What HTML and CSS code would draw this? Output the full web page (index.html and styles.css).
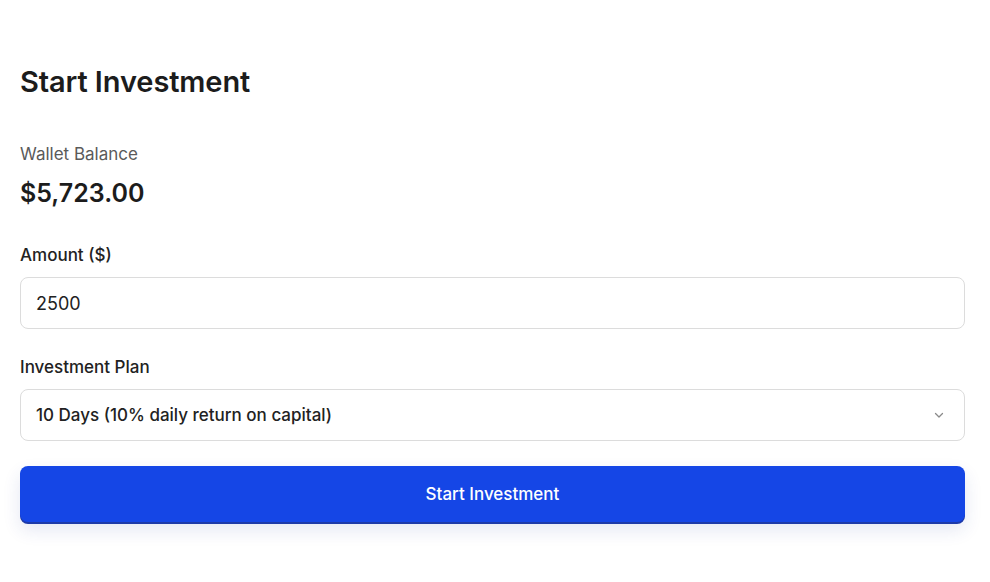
FILE: index.html
```html
<!DOCTYPE html>
<html lang="en">
<head>
  <meta charset="UTF-8">
  <meta name="viewport" content="width=device-width, initial-scale=1.0">
  <title>Start Investment</title>
  <link rel="stylesheet" href="styles.css">
</head>
<body>
  <div class="page">
    <h1>Start Investment</h1>

    <div class="balance">
      <div class="balance-label">Wallet Balance</div>
      <div class="balance-value">$5,723.00</div>
    </div>

    <div class="field">
      <label for="amount">Amount ($)</label>
      <input id="amount" class="control" type="text" value="2500">
    </div>

    <div class="field">
      <label for="plan">Investment Plan</label>
      <div class="select-wrap">
        <select id="plan" class="control select">
          <option>10 Days (10% daily return on capital)</option>
        </select>
        <svg class="chevron" width="12" height="12" viewBox="0 0 12 12">
          <path d="M2.5 4.5 L6 8 L9.5 4.5" fill="none" stroke="#8a8a8a" stroke-width="1.3" stroke-linecap="round" stroke-linejoin="round"/>
        </svg>
      </div>
    </div>

    <button class="btn">Start Investment</button>
  </div>
</body>
</html>
```

FILE: styles.css
```css
body {
  margin: 0;
  background: #fff;
  font-family: Inter, "Noto Sans", sans-serif;
  color: #1f1f1f;
}

.page {
  padding: 64px 25px 40px 20px;
  display: flex;
  flex-direction: column;
}

h1 {
  margin: 0;
  font-size: 29px;
  font-weight: 600;
  letter-spacing: -0.1px;
  color: #1c1c1c;
}

.balance {
  margin-top: 45px;
  display: flex;
  flex-direction: column;
  gap: 14px;
}

.balance-label {
  font-size: 17px;
  color: #5a5a5a;
}

.balance-value {
  font-size: 25px;
  font-weight: 600;
  color: #1c1c1c;
}

.field {
  display: flex;
  flex-direction: column;
  gap: 12px;
  margin-top: 37px;
}

.field + .field {
  margin-top: 28px;
}

label {
  font-size: 17px;
  font-weight: 450;
  color: #222;
}

.control {
  box-sizing: border-box;
  width: 100%;
  height: 52px;
  border: 1px solid #dcdcdc;
  border-radius: 8px;
  padding: 0 15px;
  font-family: inherit;
  font-size: 18px;
  color: #222;
  background: #fff;
  outline: none;
}

.select-wrap {
  position: relative;
}

.select {
  -webkit-appearance: none;
  appearance: none;
  font-size: 17px;
  font-weight: 450;
}

.chevron {
  position: absolute;
  right: 20px;
  top: 20px;
  pointer-events: none;
}

.btn {
  margin-top: 25px;
  height: 56px;
  border: none;
  border-radius: 8px;
  background: #1546e6;
  color: #fff;
  font-family: inherit;
  font-size: 17px;
  font-weight: 450;
  box-shadow: 0 2px 0 #1d3aa8, 0 8px 18px rgba(30, 60, 160, 0.12);
  cursor: pointer;
}
```
